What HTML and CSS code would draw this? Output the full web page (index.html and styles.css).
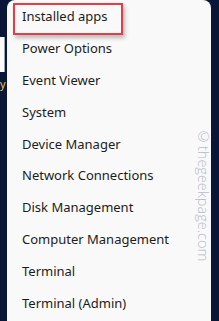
FILE: index.html
```html
<!DOCTYPE html>
<html>
<head>
<meta charset="utf-8">
<link rel="stylesheet" href="styles.css">
</head>
<body>
<div class="screen">
  <div class="edge">
    <div class="edge-icon"></div>
    <div class="edge-label">y</div>
  </div>
  <div class="menu">
    <div class="item">Installed apps</div>
    <div class="item">Power Options</div>
    <div class="item">Event Viewer</div>
    <div class="item">System</div>
    <div class="item">Device Manager</div>
    <div class="item">Network Connections</div>
    <div class="item">Disk Management</div>
    <div class="item">Computer Management</div>
    <div class="item">Terminal</div>
    <div class="item">Terminal (Admin)</div>
    <div class="highlight"></div>
    <div class="watermark">©thegeekpage.com</div>
  </div>
</div>
</body>
</html>
```
FILE: styles.css
```css
html, body {
  margin: 0;
  padding: 0;
  background: #0a1638;
}
.screen {
  width: 219px;
  height: 321px;
  overflow: hidden;
  display: flex;
  background: #0a1638;
}
.edge {
  width: 7px;
  flex: none;
  display: flex;
  flex-direction: column;
  overflow: hidden;
}
.edge-icon {
  margin-top: 37px;
  width: 5px;
  height: 35px;
  background: #fbfbfb;
  border-right: 1px solid #9aa0ad;
  box-sizing: border-box;
}
.edge-label {
  margin-top: 5px;
  margin-left: 0;
  font-family: "Noto Sans", sans-serif;
  font-size: 11px;
  line-height: 14px;
  color: #e9c64c;
}
.menu {
  position: relative;
  width: 204px;
  flex: none;
  height: 340px;
  background: #f9f9f9;
  border-radius: 8px 8px 0 0;
  padding-top: 1px;
  box-sizing: border-box;
  font-family: "Noto Sans", sans-serif;
  font-size: 13px;
  color: #1c1c1c;
}
.item {
  height: 31.9px;
  line-height: 31.9px;
  padding-left: 15px;
  white-space: nowrap;
}
.highlight {
  position: absolute;
  left: 6px;
  top: 3px;
  width: 110px;
  height: 32px;
  border: 2.5px solid #ec3a44;
  box-sizing: border-box;
  box-shadow: 2px 3px 4px rgba(0,0,0,0.25);
}
.watermark {
  position: absolute;
  left: 189px;
  top: 127px;
  writing-mode: vertical-rl;
  font-family: "Open Sans", sans-serif;
  font-weight: 300;
  font-size: 14.5px;
  line-height: 14px;
  color: #b8bcca;
  white-space: nowrap;
}
```
